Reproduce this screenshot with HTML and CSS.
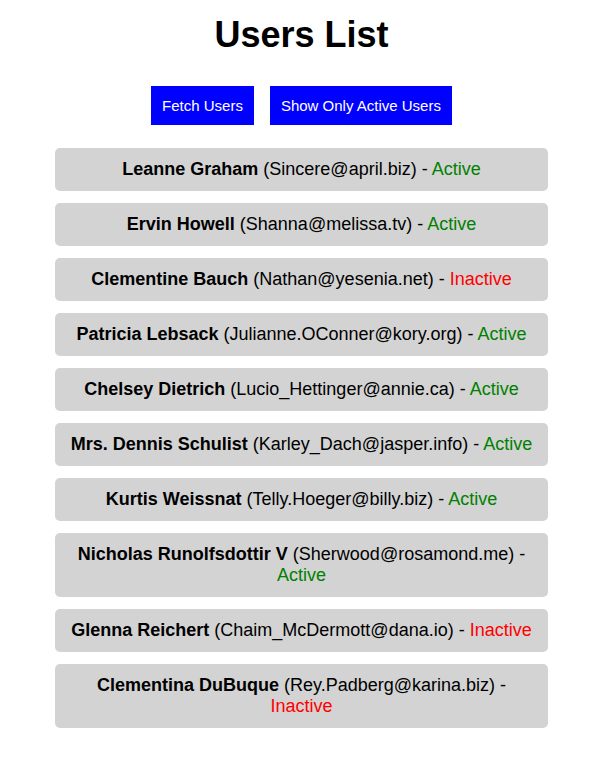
FILE: index.html
```html
<!DOCTYPE html>
<html lang="en">
<head>
<meta charset="utf-8">
<title>Users List</title>
<link rel="stylesheet" href="styles.css">
</head>
<body>
<main class="container">
<h1 class="title">Users List</h1>
<div class="actions">
<button type="button" class="button">Fetch Users</button>
<button type="button" class="button">Show Only Active Users</button>
</div>
<ul class="users">
<li class="user"><strong>Leanne Graham</strong> (Sincere@april.biz) - <span class="active">Active</span></li>
<li class="user"><strong>Ervin Howell</strong> (Shanna@melissa.tv) - <span class="active">Active</span></li>
<li class="user"><strong>Clementine Bauch</strong> (Nathan@yesenia.net) - <span class="inactive">Inactive</span></li>
<li class="user"><strong>Patricia Lebsack</strong> (Julianne.OConner@kory.org) - <span class="active">Active</span></li>
<li class="user"><strong>Chelsey Dietrich</strong> (Lucio_Hettinger@annie.ca) - <span class="active">Active</span></li>
<li class="user"><strong>Mrs. Dennis Schulist</strong> (Karley_Dach@jasper.info) - <span class="active">Active</span></li>
<li class="user"><strong>Kurtis Weissnat</strong> (Telly.Hoeger@billy.biz) - <span class="active">Active</span></li>
<li class="user"><strong>Nicholas Runolfsdottir V</strong> (Sherwood@rosamond.me) - <span class="active">Active</span></li>
<li class="user"><strong>Glenna Reichert</strong> (Chaim_McDermott@dana.io) - <span class="inactive">Inactive</span></li>
<li class="user"><strong>Clementina DuBuque</strong> (Rey.Padberg@karina.biz) - <span class="inactive">Inactive</span></li>
</ul>
</main>
</body>
</html>
```
FILE: styles.css
```css
body {
  margin: 0;
  background: #fff;
  color: #000;
  font-family: "Liberation Sans", Arial, sans-serif;
  font-size: 18px;
  line-height: 21px;
  text-align: center;
}

.container {
  padding: 13px 64px 24px 55px;
}

.title {
  margin: 0 0 29px;
  font-size: 36px;
  line-height: 44px;
}

.actions {
  display: flex;
  justify-content: center;
  gap: 16px;
  margin-bottom: 23px;
}

.button {
  padding: 11px;
  border: 0;
  background: #00f;
  color: #fff;
  font: 15px/17px "Liberation Sans", Arial, sans-serif;
  cursor: pointer;
}

.users {
  display: grid;
  gap: 12px;
  margin: 0;
  padding: 0;
  list-style: none;
}

.user {
  padding: 11px;
  border-radius: 5px;
  background: #d3d3d3;
}

.active {
  color: green;
}

.inactive {
  color: red;
}
```
